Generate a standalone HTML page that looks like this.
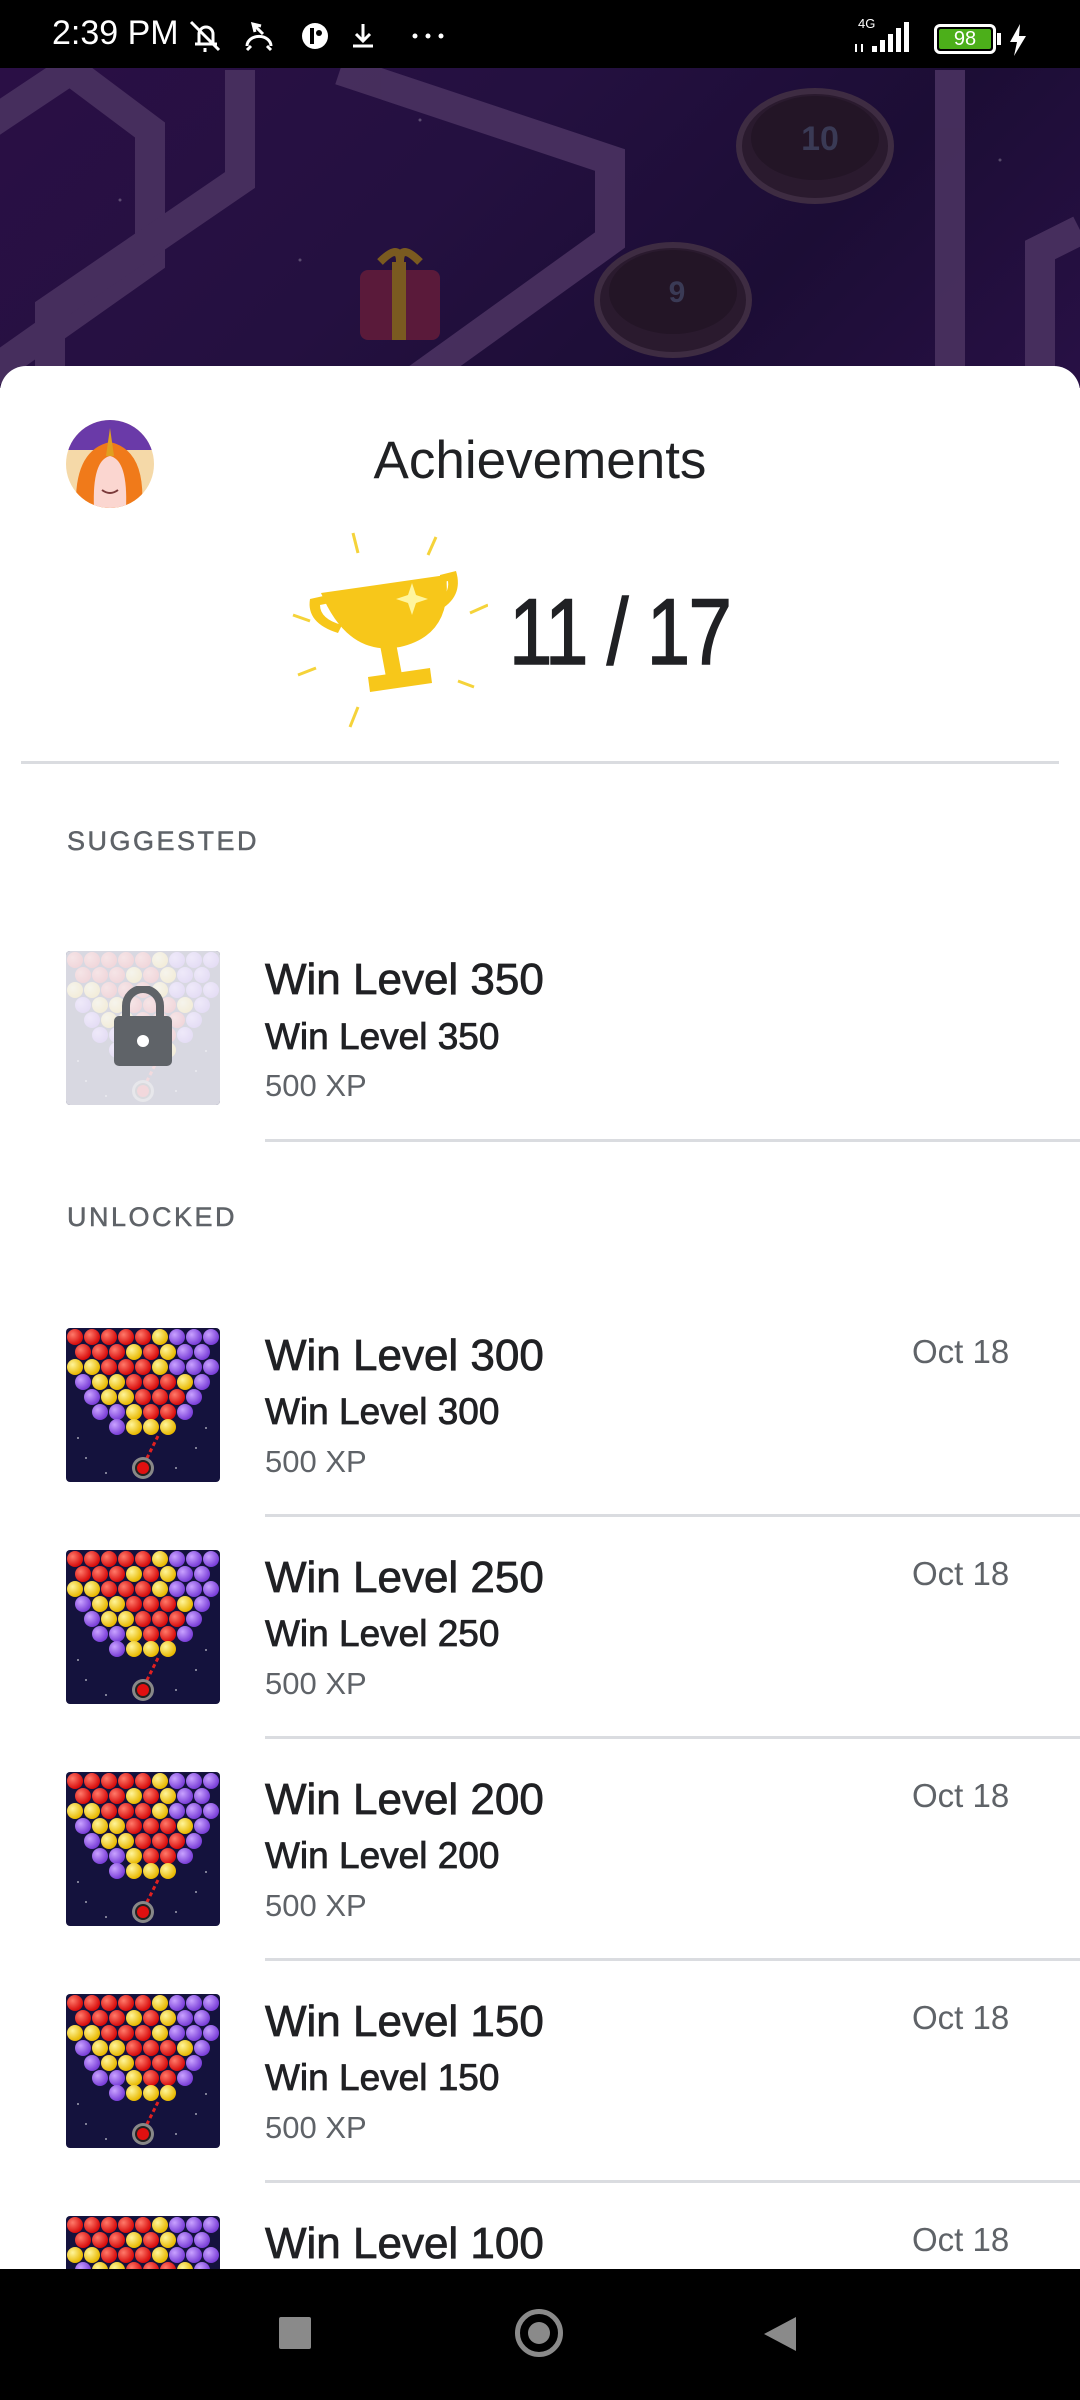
<!DOCTYPE html>
<html><head><meta charset="utf-8">
<style>
*{margin:0;padding:0;box-sizing:border-box}
body{width:1080px;height:2400px;overflow:hidden;position:relative;background:#fff;font-family:"Liberation Sans",Arial,sans-serif}
.abs{position:absolute}
.status{left:0;top:0;width:1080px;height:68px;background:#000;color:#fff}
.game{left:0;top:68px;width:1080px;height:320px;background:linear-gradient(135deg,#2a0f45 0%,#241040 40%,#1c0d35 70%,#281045 100%)}
.sheet{left:0;top:366px;width:1080px;height:1960px;background:#fff;border-radius:26px 26px 0 0}
.title{left:0;width:1080px;text-align:center;top:430px;font-size:53px;color:#202124}
.count{left:509px;top:578px;font-size:94px;color:#202124;-webkit-text-stroke:1.5px #202124;transform:scaleX(0.83);transform-origin:left top;letter-spacing:-2px}
.hdr{left:67px;font-size:27px;letter-spacing:2.5px;color:#5f6368;-webkit-text-stroke:0.5px #5f6368}
.div{height:3px;background:#dadce0}
.t1{left:265px;font-size:44px;color:#202124;-webkit-text-stroke:0.8px #202124}
.t2{left:265px;font-size:37px;color:#202124;-webkit-text-stroke:0.8px #202124}
.t3{left:265px;font-size:31px;color:#5f6368}
.date{left:912px;font-size:33px;color:#5f6368}
.icon{left:66px;width:154px;height:154px;border-radius:4px;overflow:hidden}
.nav{left:0;top:2269px;width:1080px;height:131px;background:#000}
</style></head><body>

<svg width="0" height="0" style="position:absolute">
<defs>
<radialGradient id="gr" cx="35%" cy="35%" r="65%"><stop offset="0" stop-color="#ff7a6a"/><stop offset="1" stop-color="#d80c0c"/></radialGradient>
<radialGradient id="gy" cx="35%" cy="35%" r="65%"><stop offset="0" stop-color="#fff59a"/><stop offset="1" stop-color="#e8b800"/></radialGradient>
<radialGradient id="gp" cx="35%" cy="35%" r="65%"><stop offset="0" stop-color="#c9a2ff"/><stop offset="1" stop-color="#7a3fd8"/></radialGradient>
<symbol id="bub" viewBox="0 0 154 154">
<rect width="154" height="154" fill="#14123d"/>
<g fill="#fff" opacity=".6"><circle cx="20" cy="130" r="1"/><circle cx="130" cy="120" r="1"/><circle cx="40" cy="145" r="1"/><circle cx="110" cy="140" r="1"/><circle cx="140" cy="100" r="1"/><circle cx="12" cy="110" r="1"/></g>
<g>
<circle cx="9" cy="9" r="8" fill="url(#gr)"/><circle cx="26" cy="9" r="8" fill="url(#gr)"/><circle cx="43" cy="9" r="8" fill="url(#gr)"/><circle cx="60" cy="9" r="8" fill="url(#gr)"/><circle cx="77" cy="9" r="8" fill="url(#gr)"/><circle cx="94" cy="9" r="8" fill="url(#gy)"/><circle cx="111" cy="9" r="8" fill="url(#gp)"/><circle cx="128" cy="9" r="8" fill="url(#gp)"/><circle cx="145" cy="9" r="8" fill="url(#gp)"/>
<circle cx="17" cy="24" r="8" fill="url(#gr)"/><circle cx="34" cy="24" r="8" fill="url(#gr)"/><circle cx="51" cy="24" r="8" fill="url(#gr)"/><circle cx="68" cy="24" r="8" fill="url(#gy)"/><circle cx="85" cy="24" r="8" fill="url(#gr)"/><circle cx="102" cy="24" r="8" fill="url(#gy)"/><circle cx="119" cy="24" r="8" fill="url(#gp)"/><circle cx="136" cy="24" r="8" fill="url(#gp)"/>
<circle cx="9" cy="39" r="8" fill="url(#gy)"/><circle cx="26" cy="39" r="8" fill="url(#gy)"/><circle cx="43" cy="39" r="8" fill="url(#gr)"/><circle cx="60" cy="39" r="8" fill="url(#gr)"/><circle cx="77" cy="39" r="8" fill="url(#gr)"/><circle cx="94" cy="39" r="8" fill="url(#gy)"/><circle cx="111" cy="39" r="8" fill="url(#gp)"/><circle cx="128" cy="39" r="8" fill="url(#gp)"/><circle cx="145" cy="39" r="8" fill="url(#gp)"/>
<circle cx="17" cy="54" r="8" fill="url(#gp)"/><circle cx="34" cy="54" r="8" fill="url(#gy)"/><circle cx="51" cy="54" r="8" fill="url(#gy)"/><circle cx="68" cy="54" r="8" fill="url(#gr)"/><circle cx="85" cy="54" r="8" fill="url(#gr)"/><circle cx="102" cy="54" r="8" fill="url(#gr)"/><circle cx="119" cy="54" r="8" fill="url(#gy)"/><circle cx="136" cy="54" r="8" fill="url(#gp)"/>
<circle cx="26" cy="69" r="8" fill="url(#gp)"/><circle cx="43" cy="69" r="8" fill="url(#gy)"/><circle cx="60" cy="69" r="8" fill="url(#gy)"/><circle cx="77" cy="69" r="8" fill="url(#gr)"/><circle cx="94" cy="69" r="8" fill="url(#gr)"/><circle cx="111" cy="69" r="8" fill="url(#gr)"/><circle cx="128" cy="69" r="8" fill="url(#gp)"/>
<circle cx="34" cy="84" r="8" fill="url(#gp)"/><circle cx="51" cy="84" r="8" fill="url(#gp)"/><circle cx="68" cy="84" r="8" fill="url(#gy)"/><circle cx="85" cy="84" r="8" fill="url(#gr)"/><circle cx="102" cy="84" r="8" fill="url(#gr)"/><circle cx="119" cy="84" r="8" fill="url(#gp)"/>
<circle cx="51" cy="99" r="8" fill="url(#gp)"/><circle cx="68" cy="99" r="8" fill="url(#gy)"/><circle cx="85" cy="99" r="8" fill="url(#gy)"/><circle cx="102" cy="99" r="8" fill="url(#gy)"/>
</g>
<path d="M92 108 L77 138" stroke="#e02020" stroke-width="3" stroke-dasharray="4 3"/>
<circle cx="77" cy="140" r="11" fill="#888"/><circle cx="77" cy="140" r="8" fill="#222"/><circle cx="77" cy="140" r="6" fill="#e01010"/>
</symbol>
</defs></svg>

<!-- status bar -->
<div class="abs status">
<div class="abs" style="left:52px;top:14px;font-size:34px;">2:39 PM</div>
<svg class="abs" style="left:185px;top:16px" width="260" height="40" viewBox="0 0 260 40" fill="none" stroke="#fff" stroke-width="3">
<path d="M10 28 h22 M14 28 v-10 a7 7 0 0 1 14 0 v10 M6 6 L34 34 M20 32 v4"/>
<path d="M62 30 a10 8 0 0 1 24 0 M66 30 l-4 4 M82 30 l4 4 M68 8 l10 10 M70 16 l-2 -8 l8 2"/>
<circle cx="130" cy="20" r="13" fill="#fff" stroke="none"/><path d="M127 12 v16" stroke="#000" stroke-width="4"/><circle cx="134" cy="17" r="3" fill="#000" stroke="none"/>
<path d="M178 8 v16 M171 18 l7 7 l7 -7 M168 30 h20"/>
<circle cx="230" cy="20" r="2.5" fill="#fff" stroke="none"/><circle cx="243" cy="20" r="2.5" fill="#fff" stroke="none"/><circle cx="256" cy="20" r="2.5" fill="#fff" stroke="none"/>
</svg>
<div class="abs" style="left:858px;top:16px;font-size:13px;">4G</div>
<svg class="abs" style="left:852px;top:18px" width="70" height="40" viewBox="0 0 70 40" fill="#fff">
<rect x="20" y="28" width="5" height="6"/><rect x="28" y="22" width="5" height="12"/><rect x="36" y="16" width="5" height="18"/><rect x="44" y="10" width="5" height="24"/><rect x="52" y="4" width="5" height="30"/>
<path d="M4 26 v8 M10 34 v-8" stroke="#fff" stroke-width="2"/></svg>
<div class="abs" style="left:934px;top:24px;width:62px;height:30px;border:3px solid #fff;border-radius:6px;padding:2px"><div style="background:#4caf1a;width:100%;height:100%;border-radius:2px;color:#fff;font-size:20px;text-align:center;line-height:20px">98</div></div>
<div class="abs" style="left:997px;top:33px;width:4px;height:12px;background:#fff"></div>
<svg class="abs" style="left:1008px;top:24px" width="20" height="32" viewBox="0 0 20 32"><path d="M12 0 L2 18 h7 l-3 14 L18 12 h-7 z" fill="#fff"/></svg>
</div>

<!-- game background -->
<div class="abs game">
<svg width="1080" height="320" viewBox="0 68 1080 320">
<g fill="none" stroke="#4a3260" stroke-width="30" opacity=".9">
<path d="M-20 130 L70 70 L150 130 L150 260 L-20 380"/>
<path d="M50 420 L50 310 L240 180 L240 70"/>
<path d="M340 70 L610 160 L610 240 L360 420"/>
<path d="M950 70 L950 420"/>
<path d="M1080 230 L1040 250 L1040 420"/>
</g>
<g fill="#fff" opacity=".25"><circle cx="120" cy="200" r="1.5"/><circle cx="300" cy="260" r="1.5"/><circle cx="420" cy="120" r="1.5"/><circle cx="720" cy="300" r="1.5"/><circle cx="860" cy="110" r="1.5"/><circle cx="1000" cy="160" r="1.5"/></g>
<ellipse cx="815" cy="146" rx="76" ry="55" fill="#2a1a2e" stroke="#3e2c42" stroke-width="6"/>
<ellipse cx="815" cy="138" rx="64" ry="42" fill="#231526"/>
<text x="820" y="150" font-family="Liberation Sans" font-weight="bold" font-size="34" fill="#3a3a55" text-anchor="middle">10</text>
<ellipse cx="673" cy="300" rx="76" ry="55" fill="#2a1a2e" stroke="#3e2c42" stroke-width="6"/>
<ellipse cx="673" cy="292" rx="64" ry="42" fill="#231526"/>
<text x="677" y="302" font-family="Liberation Sans" font-weight="bold" font-size="30" fill="#3a3a55" text-anchor="middle">9</text>
<rect x="360" y="270" width="80" height="70" rx="8" fill="#5a1a3a"/>
<rect x="392" y="262" width="14" height="78" fill="#7a5a20"/>
<path d="M380 262 q20 -20 20 0 q0 -20 20 0" stroke="#7a5a20" stroke-width="8" fill="none"/>
</svg>
</div>

<!-- sheet -->
<div class="abs sheet"></div>

<!-- avatar -->
<svg class="abs" style="left:66px;top:420px" width="88" height="88" viewBox="0 0 88 88">
<defs><clipPath id="ac"><circle cx="44" cy="44" r="44"/></clipPath></defs>
<g clip-path="url(#ac)">
<rect width="88" height="88" fill="#f5d9a8"/>
<rect width="88" height="30" fill="#6a3aa8"/>
<path d="M10 88 Q8 30 44 22 Q80 30 76 88 Z" fill="#f07a1a"/>
<path d="M28 88 Q26 40 44 36 Q62 40 60 88 Z" fill="#fbd6d0"/>
<path d="M44 8 L48 36 L40 36 Z" fill="#e0a020"/>
<path d="M36 70 q8 6 16 0" stroke="#7a3a3a" stroke-width="2" fill="none"/>
</g></svg>

<div class="abs title">Achievements</div>

<!-- trophy -->
<svg class="abs" style="left:288px;top:525px" width="200" height="205" viewBox="0 0 200 205">
<g stroke="#f5d33a" stroke-width="3" fill="none">
<path d="M65 8 L70 28"/><path d="M148 12 L140 30"/><path d="M5 90 L22 96"/><path d="M200 80 L182 88"/><path d="M10 150 L28 143"/><path d="M186 162 L170 156"/><path d="M62 202 L70 182"/>
</g>
<path d="M40 70 L22 74 Q18 98 50 108 L54 100 Q32 94 32 80 L42 78 Z" fill="#f7c71a"/>
<path d="M152 50 L168 46 Q176 72 150 86 L146 78 Q162 70 160 56 L152 58 Z" fill="#f7c71a"/>
<path d="M33 68 L158 50 Q165 110 112 122 Q60 132 33 68 Z" fill="#f7c71a"/>
<path d="M92 120 L108 118 L114 150 L98 152 Z" fill="#f7c71a"/>
<path d="M80 152 L142 143 L144 158 L82 167 Z" fill="#f7c71a"/>
<path d="M120 70 l4 -12 l4 12 l12 4 l-12 4 l-4 12 l-4 -12 l-12 -4 z" fill="#fff59e"/>
</svg>
<div class="abs count">11 / 17</div>

<div class="abs div" style="left:21px;top:761px;width:1038px"></div>

<div class="abs hdr" style="top:826px">SUGGESTED</div>

<!-- suggested item -->
<div class="abs icon" style="top:951px">
<svg width="154" height="154"><use href="#bub"/></svg>
<div style="position:absolute;inset:0;background:rgba(244,244,248,.88)"></div>
<svg style="position:absolute;left:46px;top:35px" width="62" height="80" viewBox="0 0 62 80">
<path d="M14 32 V20 a17 17 0 0 1 34 0 V32" stroke="#5f6368" stroke-width="8" fill="none"/>
<rect x="2" y="30" width="58" height="50" rx="5" fill="#5f6368"/>
<circle cx="31" cy="55" r="6" fill="#fff"/></svg>
</div>
<div class="abs t1" style="top:955px">Win Level 350</div>
<div class="abs t2" style="top:1016px">Win Level 350</div>
<div class="abs t3" style="top:1068px">500 XP</div>
<div class="abs div" style="left:265px;top:1139px;width:815px"></div>

<div class="abs hdr" style="top:1202px">UNLOCKED</div>

<!-- unlocked items -->
<div class="abs icon" style="top:1328px"><svg width="154" height="154"><use href="#bub"/></svg></div>
<div class="abs t1" style="top:1331px">Win Level 300</div>
<div class="abs t2" style="top:1391px">Win Level 300</div>
<div class="abs t3" style="top:1444px">500 XP</div>
<div class="abs date" style="top:1333px">Oct 18</div>
<div class="abs div" style="left:265px;top:1514px;width:815px"></div>

<div class="abs icon" style="top:1550px"><svg width="154" height="154"><use href="#bub"/></svg></div>
<div class="abs t1" style="top:1553px">Win Level 250</div>
<div class="abs t2" style="top:1613px">Win Level 250</div>
<div class="abs t3" style="top:1666px">500 XP</div>
<div class="abs date" style="top:1555px">Oct 18</div>
<div class="abs div" style="left:265px;top:1736px;width:815px"></div>

<div class="abs icon" style="top:1772px"><svg width="154" height="154"><use href="#bub"/></svg></div>
<div class="abs t1" style="top:1775px">Win Level 200</div>
<div class="abs t2" style="top:1835px">Win Level 200</div>
<div class="abs t3" style="top:1888px">500 XP</div>
<div class="abs date" style="top:1777px">Oct 18</div>
<div class="abs div" style="left:265px;top:1958px;width:815px"></div>

<div class="abs icon" style="top:1994px"><svg width="154" height="154"><use href="#bub"/></svg></div>
<div class="abs t1" style="top:1997px">Win Level 150</div>
<div class="abs t2" style="top:2057px">Win Level 150</div>
<div class="abs t3" style="top:2110px">500 XP</div>
<div class="abs date" style="top:1999px">Oct 18</div>
<div class="abs div" style="left:265px;top:2180px;width:815px"></div>

<div class="abs icon" style="top:2216px"><svg width="154" height="154"><use href="#bub"/></svg></div>
<div class="abs t1" style="top:2219px">Win Level 100</div>
<div class="abs date" style="top:2221px">Oct 18</div>

<!-- nav bar -->
<div class="abs nav">
<div class="abs" style="left:279px;top:48px;width:32px;height:32px;background:#8a8a8a;border-radius:2px"></div>
<div class="abs" style="left:515px;top:40px;width:48px;height:48px;border:5px solid #8a8a8a;border-radius:50%"></div>
<div class="abs" style="left:528px;top:53px;width:22px;height:22px;background:#8a8a8a;border-radius:50%"></div>
<svg class="abs" style="left:762px;top:46px" width="36" height="38" viewBox="0 0 36 38"><path d="M34 2 L2 19 L34 36 Z" fill="#8a8a8a"/></svg>
</div>
</body></html>
